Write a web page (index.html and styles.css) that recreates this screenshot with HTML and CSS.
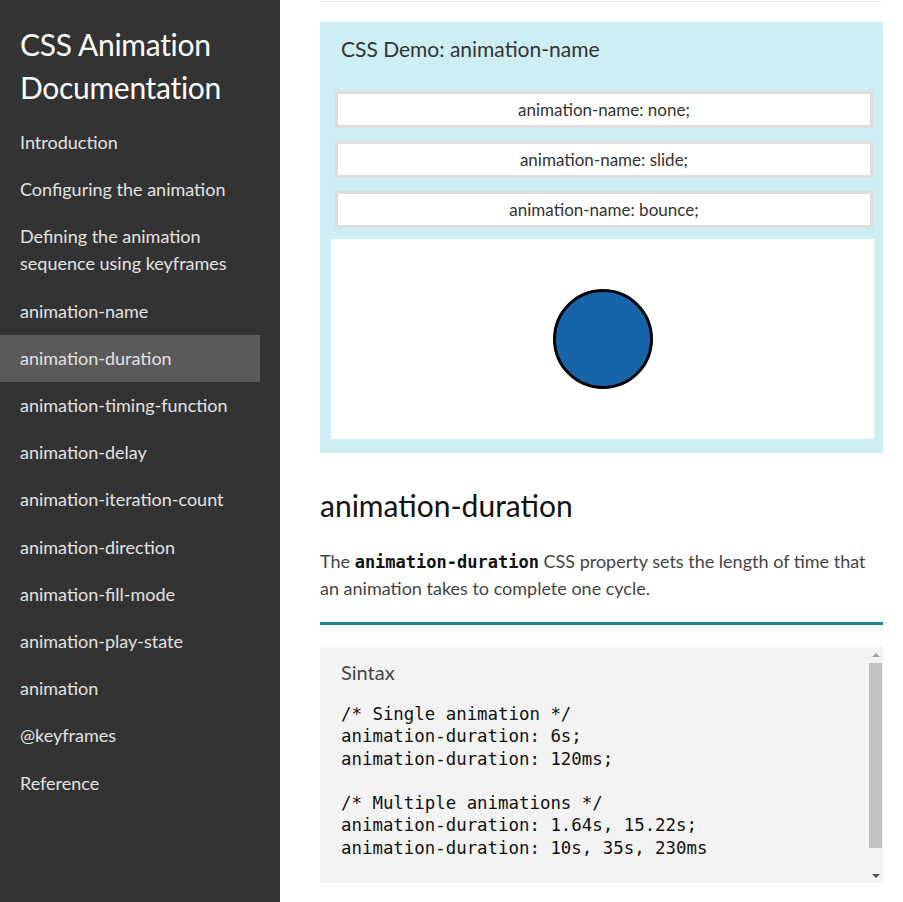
FILE: index.html
```html
<!DOCTYPE html>
<html lang="en">
<head>
<meta charset="utf-8">
<title>CSS Animation Documentation</title>
<link rel="stylesheet" href="styles.css">
</head>
<body>
<div class="layout">
  <nav class="sidebar">
    <header class="brand">CSS Animation Documentation</header>
    <ul class="nav-list">
      <li><a class="nav-link" href="#">Introduction</a></li>
      <li><a class="nav-link" href="#">Configuring the animation</a></li>
      <li><a class="nav-link" href="#">Defining the animation sequence using keyframes</a></li>
      <li><a class="nav-link" href="#">animation-name</a></li>
      <li><a class="nav-link active" href="#">animation-duration</a></li>
      <li><a class="nav-link" href="#">animation-timing-function</a></li>
      <li><a class="nav-link" href="#">animation-delay</a></li>
      <li><a class="nav-link" href="#">animation-iteration-count</a></li>
      <li><a class="nav-link" href="#">animation-direction</a></li>
      <li><a class="nav-link" href="#">animation-fill-mode</a></li>
      <li><a class="nav-link" href="#">animation-play-state</a></li>
      <li><a class="nav-link" href="#">animation</a></li>
      <li><a class="nav-link" href="#">@keyframes</a></li>
      <li><a class="nav-link" href="#">Reference</a></li>
    </ul>
  </nav>
  <main class="main">
    <div class="prev-strip"></div>
    <section class="demo">
      <div class="demo-title">CSS Demo: animation-name</div>
      <div class="demo-options">
        <div class="demo-option">animation-name: none;</div>
        <div class="demo-option">animation-name: slide;</div>
        <div class="demo-option">animation-name: bounce;</div>
      </div>
      <div class="demo-stage">
        <div class="ball"></div>
      </div>
    </section>
    <h2 class="section-title">animation-duration</h2>
    <p class="section-text">The <code class="inline-code">animation-duration</code> CSS property sets the length of time that an animation takes to complete one cycle.</p>
    <hr class="divider">
    <div class="syntax">
      <div class="syntax-body">
        <div class="syntax-title">Sintax</div>
<pre class="code">/* Single animation */
animation-duration: 6s;
animation-duration: 120ms;

/* Multiple animations */
animation-duration: 1.64s, 15.22s;
animation-duration: 10s, 35s, 230ms</pre>
      </div>
      <div class="scrollbar">
        <div class="sb-arrow sb-up"></div>
        <div class="sb-thumb"></div>
        <div class="sb-arrow sb-down"></div>
      </div>
    </div>
  </main>
</div>
</body>
</html>
```
FILE: styles.css
```css
* { box-sizing: border-box; }
html, body { margin: 0; padding: 0; }
body {
  font-family: Lato, "Open Sans", sans-serif;
  background: #fff;
  color: #333;
  width: 903px;
  height: 902px;
  overflow: hidden;
}
.layout {
  display: flex;
  height: 902px;
}
.sidebar {
  width: 280px;
  flex: none;
  background: #333333;
  padding: 23px 20px 0 0;
}
.brand {
  color: #fff;
  font-size: 30px;
  line-height: 43px;
  padding-left: 20px;
  margin-bottom: 10px;
  letter-spacing: -0.3px;
}
.nav-list {
  list-style: none;
  margin: 0;
  padding: 0;
}
.nav-link {
  display: block;
  color: #e2e2e2;
  text-decoration: none;
  font-size: 18px;
  line-height: 27px;
  padding: 10.1px 20px 10.1px 20px;
}
.nav-link.active {
  background: #5a5a5a;
}
.main {
  flex: 1;
  padding: 0 20px 0 40px;
}
.prev-strip {
  height: 2px;
  border-bottom: 1px solid #ebebeb;
}
.demo {
  margin-top: 20px;
  background: #cdeef3;
  padding: 15px 9px 14px 11px;
}
.demo-title {
  font-size: 21px;
  line-height: 24px;
  color: #333;
  padding-left: 10px;
}
.demo-options {
  margin-top: 30px;
  display: flex;
  flex-direction: column;
  gap: 13px;
}
.demo-option {
  margin: 0 1px 0 4px;
  height: 37px;
  border: 3px solid #dddddd;
  background: #fff;
  text-align: center;
  font-size: 17px;
  line-height: 31px;
  color: #333;
}
.demo-stage {
  margin-top: 11px;
  height: 200px;
  background: #fff;
  display: flex;
  align-items: center;
  justify-content: center;
}
.ball {
  width: 100px;
  height: 100px;
  border-radius: 50%;
  border: 3px solid #000;
  background: #1864a9;
}
.section-title {
  font-weight: normal;
  font-size: 30px;
  line-height: 36px;
  color: #111;
  margin: 34px 0 0 0;
}
.section-text {
  font-size: 18px;
  line-height: 27px;
  color: #444;
  margin: 25px 0 0 0;
}
.inline-code {
  font-family: "DejaVu Sans Mono", monospace;
  font-weight: bold;
  font-size: 17px;
  line-height: 1;
  color: #111;
}
.divider {
  border: none;
  height: 3px;
  background: #1a8892;
  margin: 20px 0 0 0;
}
.syntax {
  margin-top: 22px;
  background: #f3f3f3;
  height: 236px;
  display: flex;
}
.syntax-body {
  flex: 1;
  padding: 12px 20px 0 21px;
}
.syntax-title {
  font-size: 20px;
  line-height: 26px;
  color: #444;
}
.code {
  margin: 18px 0 0 0;
  font-family: "DejaVu Sans Mono", monospace;
  font-size: 17.4px;
  line-height: 22.3px;
  color: #111;
}
.scrollbar {
  width: 15px;
  flex: none;
  display: flex;
  flex-direction: column;
  align-items: center;
}
.sb-arrow {
  height: 15px;
  width: 15px;
  display: flex;
  align-items: center;
  justify-content: center;
}
.sb-up::before {
  content: "";
  border-left: 4px solid transparent;
  border-right: 4px solid transparent;
  border-bottom: 4px solid #a3a3a3;
}
.sb-down::before {
  content: "";
  border-left: 4px solid transparent;
  border-right: 4px solid transparent;
  border-top: 4px solid #505050;
}
.sb-thumb {
  flex: 1;
  width: 13px;
  margin: 1px 0 20px 0;
  background: #c1c1c1;
}
```
